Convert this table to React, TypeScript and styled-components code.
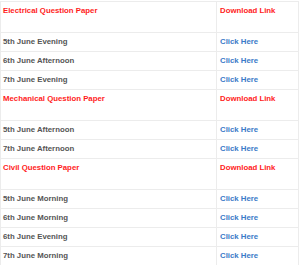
import React from "react";
import styled, { createGlobalStyle } from "styled-components";

const Global = createGlobalStyle`
  html, body { margin: 0; padding: 0; background: #fff; }
  body { font-family: "Liberation Sans", Arial, sans-serif; }
`;

const Table = styled.table`
  border-collapse: collapse;
  width: 299px;
  margin-top: 1px;
  font-family: "Liberation Sans", Arial, sans-serif;
  font-size: 7.8px;
  font-weight: bold;
  line-height: 12px;
`;

const Cell = styled.td<{ $head?: boolean; $link?: boolean }>`
  border: 1px solid #ececec;
  padding: 3px 3px;
  vertical-align: ${(p) => (p.$head ? "top" : "middle")};
  color: ${(p) => (p.$head ? "#ff1c1c" : p.$link ? "#3a7ac8" : "#555555")};
  height: ${(p) => (p.$head ? "24px" : "12px")};
  white-space: nowrap;
`;

const LeftCell = styled(Cell)`
  width: 210px;
  padding-left: 2px;
`;

type Row = { label: string; head?: boolean };

const rows: Row[] = [
  { label: "Electrical Question Paper", head: true },
  { label: "5th June Evening" },
  { label: "6th June Afternoon" },
  { label: "7th June Evening" },
  { label: "Mechanical Question Paper", head: true },
  { label: "5th June Afternoon" },
  { label: "7th June Afternoon" },
  { label: "Civil Question Paper", head: true },
  { label: "5th June Morning" },
  { label: "6th June Morning" },
  { label: "6th June Evening" },
  { label: "7th June Morning" },
];

export default function App() {
  return (
    <>
      <Global />
      <Table>
        <tbody>
          {rows.map((r, i) => (
            <tr key={i}>
              <LeftCell $head={r.head}>{r.label}</LeftCell>
              <Cell $head={r.head} $link={!r.head}>
                {r.head ? "Download Link" : "Click Here"}
              </Cell>
            </tr>
          ))}
        </tbody>
      </Table>
    </>
  );
}
